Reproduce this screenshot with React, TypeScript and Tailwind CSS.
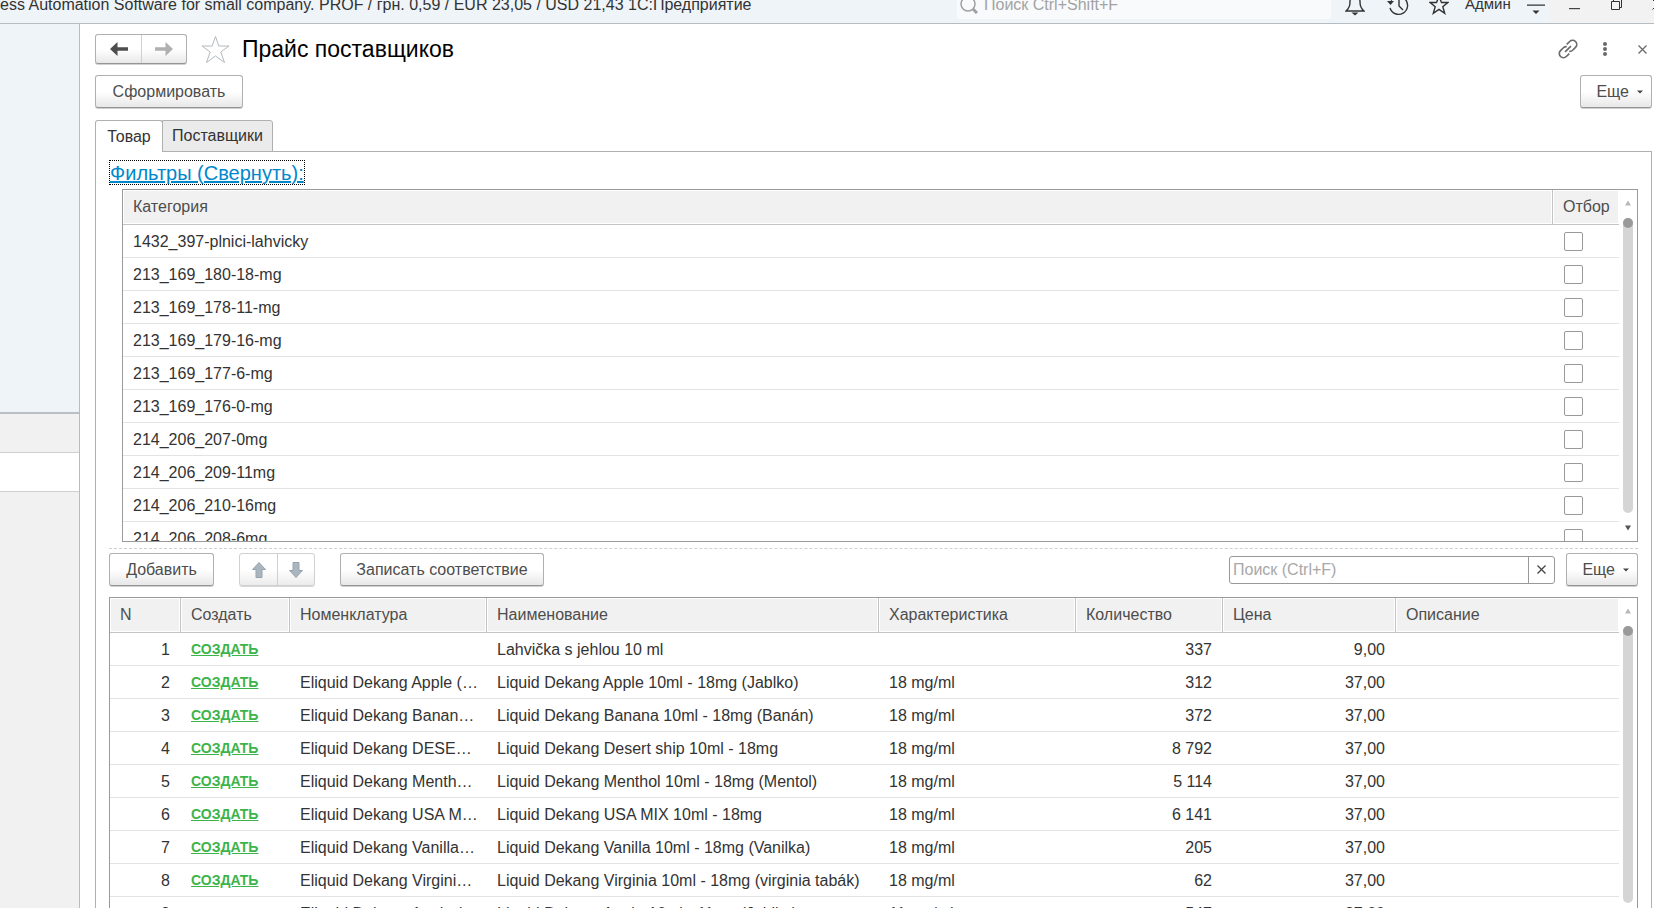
import type { ReactNode } from "react";

const categories = [
  "1432_397-plnici-lahvicky",
  "213_169_180-18-mg",
  "213_169_178-11-mg",
  "213_169_179-16-mg",
  "213_169_177-6-mg",
  "213_169_176-0-mg",
  "214_206_207-0mg",
  "214_206_209-11mg",
  "214_206_210-16mg",
  "214_206_208-6mg",
];

const products = [
  { item: "", name: "Lahvička s jehlou 10 ml", spec: "", qty: "337", price: "9,00" },
  { item: "Eliquid Dekang Apple (…", name: "Liquid Dekang Apple 10ml - 18mg (Jablko)", spec: "18 mg/ml", qty: "312", price: "37,00" },
  { item: "Eliquid Dekang Banan…", name: "Liquid Dekang Banana 10ml - 18mg (Banán)", spec: "18 mg/ml", qty: "372", price: "37,00" },
  { item: "Eliquid Dekang DESE…", name: "Liquid Dekang Desert ship 10ml - 18mg", spec: "18 mg/ml", qty: "8 792", price: "37,00" },
  { item: "Eliquid Dekang Menth…", name: "Liquid Dekang Menthol 10ml - 18mg (Mentol)", spec: "18 mg/ml", qty: "5 114", price: "37,00" },
  { item: "Eliquid Dekang USA M…", name: "Liquid Dekang USA MIX 10ml - 18mg", spec: "18 mg/ml", qty: "6 141", price: "37,00" },
  { item: "Eliquid Dekang Vanilla…", name: "Liquid Dekang Vanilla 10ml - 18mg (Vanilka)", spec: "18 mg/ml", qty: "205", price: "37,00" },
  { item: "Eliquid Dekang Virgini…", name: "Liquid Dekang Virginia 10ml - 18mg (virginia tabák)", spec: "18 mg/ml", qty: "62", price: "37,00" },
  { item: "Eliquid Dekang Apple (…", name: "Liquid Dekang Apple 10ml - 11mg (Jablko)", spec: "11 mg/ml", qty: "547", price: "37,00" },
];

const columns = [
  { title: "N", width: "w-[71px]" },
  { title: "Создать", width: "w-[109px]" },
  { title: "Номенклатура", width: "w-[197px]" },
  { title: "Наименование", width: "w-[392px]" },
  { title: "Характеристика", width: "w-[197px]" },
  { title: "Количество", width: "w-[147px]" },
  { title: "Цена", width: "w-[173px]" },
  { title: "Описание", width: "" },
];

const buttonStyle =
  "rounded-[3px] border border-[#b0b0b0] border-b-[#959595] bg-gradient-to-b from-white from-50% to-[#e8e8e8] shadow-[0_1px_0_#d0d0d0] text-[#4d4d4d]";

const Button = ({ children, className }: { children: ReactNode; className?: string }) => (
  <button type="button" className={`${buttonStyle} h-[33px] shrink-0 ${className ?? ""}`}>
    {children}
  </button>
);

const MoreButton = () => (
  <Button className="flex w-[72px] items-center justify-end gap-2 pr-2">
    Еще
    <svg width="6" height="4" viewBox="0 0 6 4" fill="#444">
      <path d="M0 0.5h6L3 3.5z" />
    </svg>
  </Button>
);

const HeadCell = ({ title, width, last }: { title: string; width: string; last?: boolean }) => (
  <th
    className={`h-[35px] border-b border-[#c4c4c4] bg-[#f1f1f1] pr-1 pl-[10px] text-left font-normal whitespace-nowrap text-[#4d4d4d] shadow-[inset_0_0_0_1px_#fff] ${width} ${last ? "" : "border-r"}`}
  >
    {title}
  </th>
);

const Scrollbar = () => (
  <div className="flex w-[18px] shrink-0 flex-col items-center pt-[10px] pb-[10px]">
    <svg width="6" height="6" viewBox="0 0 6 6" fill="#b8b8b8">
      <path d="M3 0.5L6 5.5H0z" />
    </svg>
    <div className="mt-3 w-[10px] flex-1 rounded-full bg-[#d5d5d5]">
      <div className="h-[10px] rounded-full bg-[#9a9a9a]" />
    </div>
    <svg width="6" height="6" viewBox="0 0 6 6" fill="#555" className="mt-3">
      <path d="M0 0.5h6L3 5.5z" />
    </svg>
  </div>
);

const TopBar = () => (
  <header className="-mt-3.5 flex h-[38px] shrink-0 items-center border-b border-[#b5bcc2] bg-[#eef4f8]">
    <div className="min-w-0 flex-1 whitespace-nowrap text-[#333]">
      ess Automation Software for small company. PROF / грн. 0,59 / EUR 23,05 / USD 21,43 1С:Предприятие
    </div>
    <label className="flex h-[29px] w-[374px] items-center gap-1.5 bg-[#f8fafc] pl-[3px]">
      <svg width="18" height="18" viewBox="0 0 18 18" fill="none" stroke="#a0a0a0">
        <circle cx="8" cy="8" r="7" strokeWidth="1.5" />
        <path d="M13 13l4 4" strokeWidth="3" />
      </svg>
      <input
        type="text"
        aria-label="Поиск"
        placeholder="Поиск Ctrl+Shift+F"
        className="min-w-0 flex-1 bg-transparent outline-none placeholder:text-[#a3a3a3]"
      />
    </label>
    <div className="flex w-[218px] items-center pl-[14px] text-[#333]">
      <button type="button" aria-label="Уведомления">
        <svg width="20" height="22" viewBox="0 0 20 22" fill="none" stroke="#333" strokeWidth="1.4">
          <path d="M10 1.5C6.500 1.500 5 4 5 8c0 5-1.500 7-4 9h18c-2.500-2-4-4-4-9 0-4-1.500-6.500-5-6.500z" />
          <path d="M6.500 18.500h7L10 21.500z" fill="#333" stroke="none" />
        </svg>
      </button>
      <button type="button" aria-label="История" className="ml-[22px]">
        <svg width="22" height="22" viewBox="0 0 22 22" fill="none" stroke="#333" strokeWidth="1.4">
          <path d="M4 6.500A9 9 0 1 1 3 14M12 6v6l4 4" />
          <path d="M0 7h7l-3.500 4z" fill="#333" stroke="none" />
        </svg>
      </button>
      <button type="button" aria-label="Избранное" className="ml-5">
        <svg width="20" height="20" viewBox="0 0 20 20" fill="none" stroke="#333" strokeWidth="1.4">
          <path d="M10 1.500l2.500 6h6.300l-5 4.200 1.900 6.600L10 14.400l-5.700 3.900 1.900-6.600-5-4.200h6.300z" />
        </svg>
      </button>
      <button type="button" className="ml-4 text-[15px]">
        Админ
      </button>
      <button type="button" aria-label="Меню" className="ml-4 pt-2">
        <svg width="18" height="10" viewBox="0 0 18 10" fill="#333">
          <path d="M0 0.500h18v1.200H0zM5.500 6.500h7L9 10z" />
        </svg>
      </button>
    </div>
    <div className="flex h-full w-[105px] items-center overflow-hidden bg-[#f2f2f2] pl-5">
      <button type="button" aria-label="Свернуть" className="shrink-0 pt-2">
        <svg width="11" height="2" viewBox="0 0 11 2" fill="#444">
          <path d="M0 0h11v1.200H0z" />
        </svg>
      </button>
      <button type="button" aria-label="Восстановить" className="ml-[31px] shrink-0">
        <svg width="11" height="11" viewBox="0 0 11 11" fill="none" stroke="#333">
          <path d="M0.500 2.500h8v8h-8zM2.500 2.500v-2h8v8h-2" />
        </svg>
      </button>
      <button type="button" aria-label="Закрыть" className="ml-[30px] shrink-0">
        <svg width="11" height="11" viewBox="0 0 11 11" stroke="#333">
          <path d="M0.500 0.500l10 10M10.500 0.500l-10 10" />
        </svg>
      </button>
    </div>
  </header>
);

const Sidebar = () => (
  <aside className="flex w-20 shrink-0 flex-col border-r border-[#b5bcc2] bg-[#f1f1f1]">
    <div className="h-[390px] border-b-2 border-[#b9bfc5] bg-[#eef4f8]" />
    <div className="h-[39px] border-b border-[#cfcfcf]" />
    <div className="h-[39px] border-b border-[#cfcfcf] bg-white" />
  </aside>
);

const TitleRow = () => (
  <div className="flex h-[30px] items-center pr-[5px]">
    <div className={`flex h-[30px] ${buttonStyle}`}>
      <button type="button" aria-label="Назад" className="flex w-[46px] items-center justify-center border-r border-[#d0d0d0]">
        <svg width="18" height="14" viewBox="0 0 18 14" fill="#4d4d4d">
          <path d="M0 7l7.500-7v5.200H18v3.600H7.500V14z" />
        </svg>
      </button>
      <button type="button" aria-label="Вперед" className="flex w-11 items-center justify-center">
        <svg width="18" height="14" viewBox="0 0 18 14" fill="#b0b0b0">
          <path d="M18 7l-7.500-7v5.200H0v3.600h10.500V14z" />
        </svg>
      </button>
    </div>
    <button type="button" aria-label="В избранное" className="ml-3.5">
      <svg width="29" height="29" viewBox="0 0 29 29" fill="none" stroke="#b4b9be">
        <path d="M14.500 1.500l3.300 9.500h10.200l-8.200 6 3.700 10.500-9-6.500-9 6.500 3.700-10.500-8.200-6h10.200z" />
      </svg>
    </button>
    <h1 className="ml-3 flex-1 text-[23px] text-black">Прайс поставщиков</h1>
    <button type="button" aria-label="Ссылка">
      <svg width="20" height="20" viewBox="0 0 24 24" fill="none" stroke="#6a6a6a" strokeWidth="2">
        <path d="M10.500 6.500l3.500-3.500a4.900 4.900 0 0 1 7 7l-3.500 3.500a4.900 4.900 0 0 1-4 1.300M13.500 17.500l-3.500 3.500a4.900 4.900 0 0 1-7-7l3.500-3.500a4.900 4.900 0 0 1 4-1.300M8.500 15.500l7-7" />
      </svg>
    </button>
    <button type="button" aria-label="Действия" className="ml-[25px]">
      <svg width="4" height="14" viewBox="0 0 4 14" fill="#6a6a6a">
        <circle cx="2" cy="2" r="2" />
        <circle cx="2" cy="7" r="2" />
        <circle cx="2" cy="12" r="2" />
      </svg>
    </button>
    <button type="button" aria-label="Закрыть" className="ml-[31px]">
      <svg width="9" height="9" viewBox="0 0 9 9" stroke="#6a6a6a" strokeWidth="1.3">
        <path d="M0.500 0.500l8 8M8.500 0.500l-8 8" />
      </svg>
    </button>
  </div>
);

const CategoryTable = () => (
  <div className="ml-[13px] flex h-[353px] shrink-0 overflow-hidden border border-[#9a9a9a]">
    <div className="flex-1 overflow-hidden">
      <table className="w-full table-fixed border-separate border-spacing-0">
        <thead>
          <tr>
            <HeadCell title="Категория" width="" />
            <HeadCell title="Отбор" width="w-[66px]" last />
          </tr>
        </thead>
        <tbody className="text-[#333]">
          {categories.map((category) => (
            <tr key={category}>
              <td className="h-[33px] border-b border-[#e3e3e3] px-[10px] pt-0.5">{category}</td>
              <td className="h-[33px] border-b border-[#e3e3e3] px-[11px]">
                <input
                  type="checkbox"
                  aria-label={category}
                  className="block size-[19px] appearance-none rounded-[2px] border border-[#999] bg-white"
                />
              </td>
            </tr>
          ))}
        </tbody>
      </table>
    </div>
    <Scrollbar />
  </div>
);

const Toolbar = () => (
  <div className="flex shrink-0 items-center">
    <Button className="w-[105px]">Добавить</Button>
    <div className="ml-[25px] flex h-[33px] rounded-[3px] border border-[#d0d0d0] bg-gradient-to-b from-white from-50% to-[#ececec] shadow-[0_1px_0_#d8d8d8]">
      <button type="button" aria-label="Вверх" className="flex w-[38px] items-center justify-center border-r border-[#d0d0d0]">
        <svg width="14" height="16" viewBox="0 0 14 16" fill="#aab6bf" stroke="#97a3ac">
          <path d="M7 0.500L13.500 7.500H10V15.500H4V7.500H0.500z" />
        </svg>
      </button>
      <button type="button" aria-label="Вниз" className="flex w-9 items-center justify-center">
        <svg width="14" height="16" viewBox="0 0 14 16" fill="#aab6bf" stroke="#97a3ac">
          <path d="M7 15.500L13.500 8.500H10V0.500H4V8.500H0.500z" />
        </svg>
      </button>
    </div>
    <Button className="ml-[25px] w-[204px]">Записать соответствие</Button>
    <div className="ml-auto flex h-7 w-[326px] rounded-[3px] border border-[#999] bg-white">
      <input
        type="text"
        aria-label="Поиск"
        placeholder="Поиск (Ctrl+F)"
        className="min-w-0 flex-1 pl-[3px] outline-none placeholder:text-[#a8a8a8]"
      />
      <button type="button" aria-label="Очистить" className="flex w-[26px] items-center justify-center border-l border-[#999]">
        <svg width="9" height="9" viewBox="0 0 9 9" stroke="#444" strokeWidth="1.3">
          <path d="M0.500 0.500l8 8M8.500 0.500l-8 8" />
        </svg>
      </button>
    </div>
    <div className="ml-[11px]">
      <MoreButton />
    </div>
  </div>
);

const ProductTable = () => {
  const cell = "h-[33px] border-b border-[#e3e3e3] pl-[10px] pt-0.5 whitespace-nowrap";
  return (
    <div className="mt-[11px] flex min-h-0 flex-1 overflow-hidden border border-[#9a9a9a]">
      <div className="flex-1 overflow-hidden">
        <table className="w-full table-fixed border-separate border-spacing-0">
          <thead>
            <tr>
              {columns.map((column, i) => (
                <HeadCell key={column.title} title={column.title} width={column.width} last={i === columns.length - 1} />
              ))}
            </tr>
          </thead>
          <tbody className="text-[#333]">
            {products.map((product, i) => (
              <tr key={i}>
                <td className={`${cell} pr-[11px] text-right`}>{i + 1}</td>
                <td className="h-[33px] border-b border-[#e3e3e3] pl-[10px]">
                  <a href="#" className="block text-[14px] leading-5 font-bold text-[#3cb44a] underline">
                    СОЗДАТЬ
                  </a>
                </td>
                <td className={cell}>{product.item}</td>
                <td className={cell}>{product.name}</td>
                <td className={cell}>{product.spec}</td>
                <td className={`${cell} pr-[11px] text-right`}>{product.qty}</td>
                <td className={`${cell} pr-[11px] text-right`}>{product.price}</td>
                <td className={cell} />
              </tr>
            ))}
          </tbody>
        </table>
      </div>
      <Scrollbar />
    </div>
  );
};

const App = () => {
  return (
    <div className="flex h-screen flex-col overflow-hidden bg-white font-['Liberation_Sans',Arial,sans-serif] text-base">
      <TopBar />
      <div className="flex min-h-0 flex-1">
        <Sidebar />
        <main className="-mb-6 flex min-w-0 flex-1 flex-col pt-2.5 pr-0.5 pl-[15px]">
          <TitleRow />
          <div className="mt-[11px] flex justify-between">
            <Button className="w-[148px]">Сформировать</Button>
            <MoreButton />
          </div>
          <div role="tablist" className="mt-3 flex h-8 shrink-0 text-[#333]">
            <button type="button" role="tab" aria-selected="true" className="z-10 -mb-px h-8 w-[68px] rounded-t-[3px] border border-b-0 border-[#b0b0b0] bg-white">
              Товар
            </button>
            <button type="button" role="tab" aria-selected="false" className="-ml-px h-8 w-[111px] rounded-tr-[3px] border border-[#b0b0b0] bg-[#ebebeb]">
              Поставщики
            </button>
          </div>
          <div className="-mt-px flex min-h-0 flex-1 flex-col border border-b-0 border-[#b0b0b0] px-[13px] pt-2">
            <a href="#" className="mb-1 h-[25px] shrink-0 self-start border border-dotted border-black text-xl leading-6 text-[#0088cc] underline">
              Фильтры (Свернуть):
            </a>
            <CategoryTable />
            <div className="mt-1.5 mb-1 shrink-0 border-t border-dashed border-[#d0d0d0]" />
            <Toolbar />
            <ProductTable />
          </div>
        </main>
      </div>
    </div>
  );
};

export default App;
